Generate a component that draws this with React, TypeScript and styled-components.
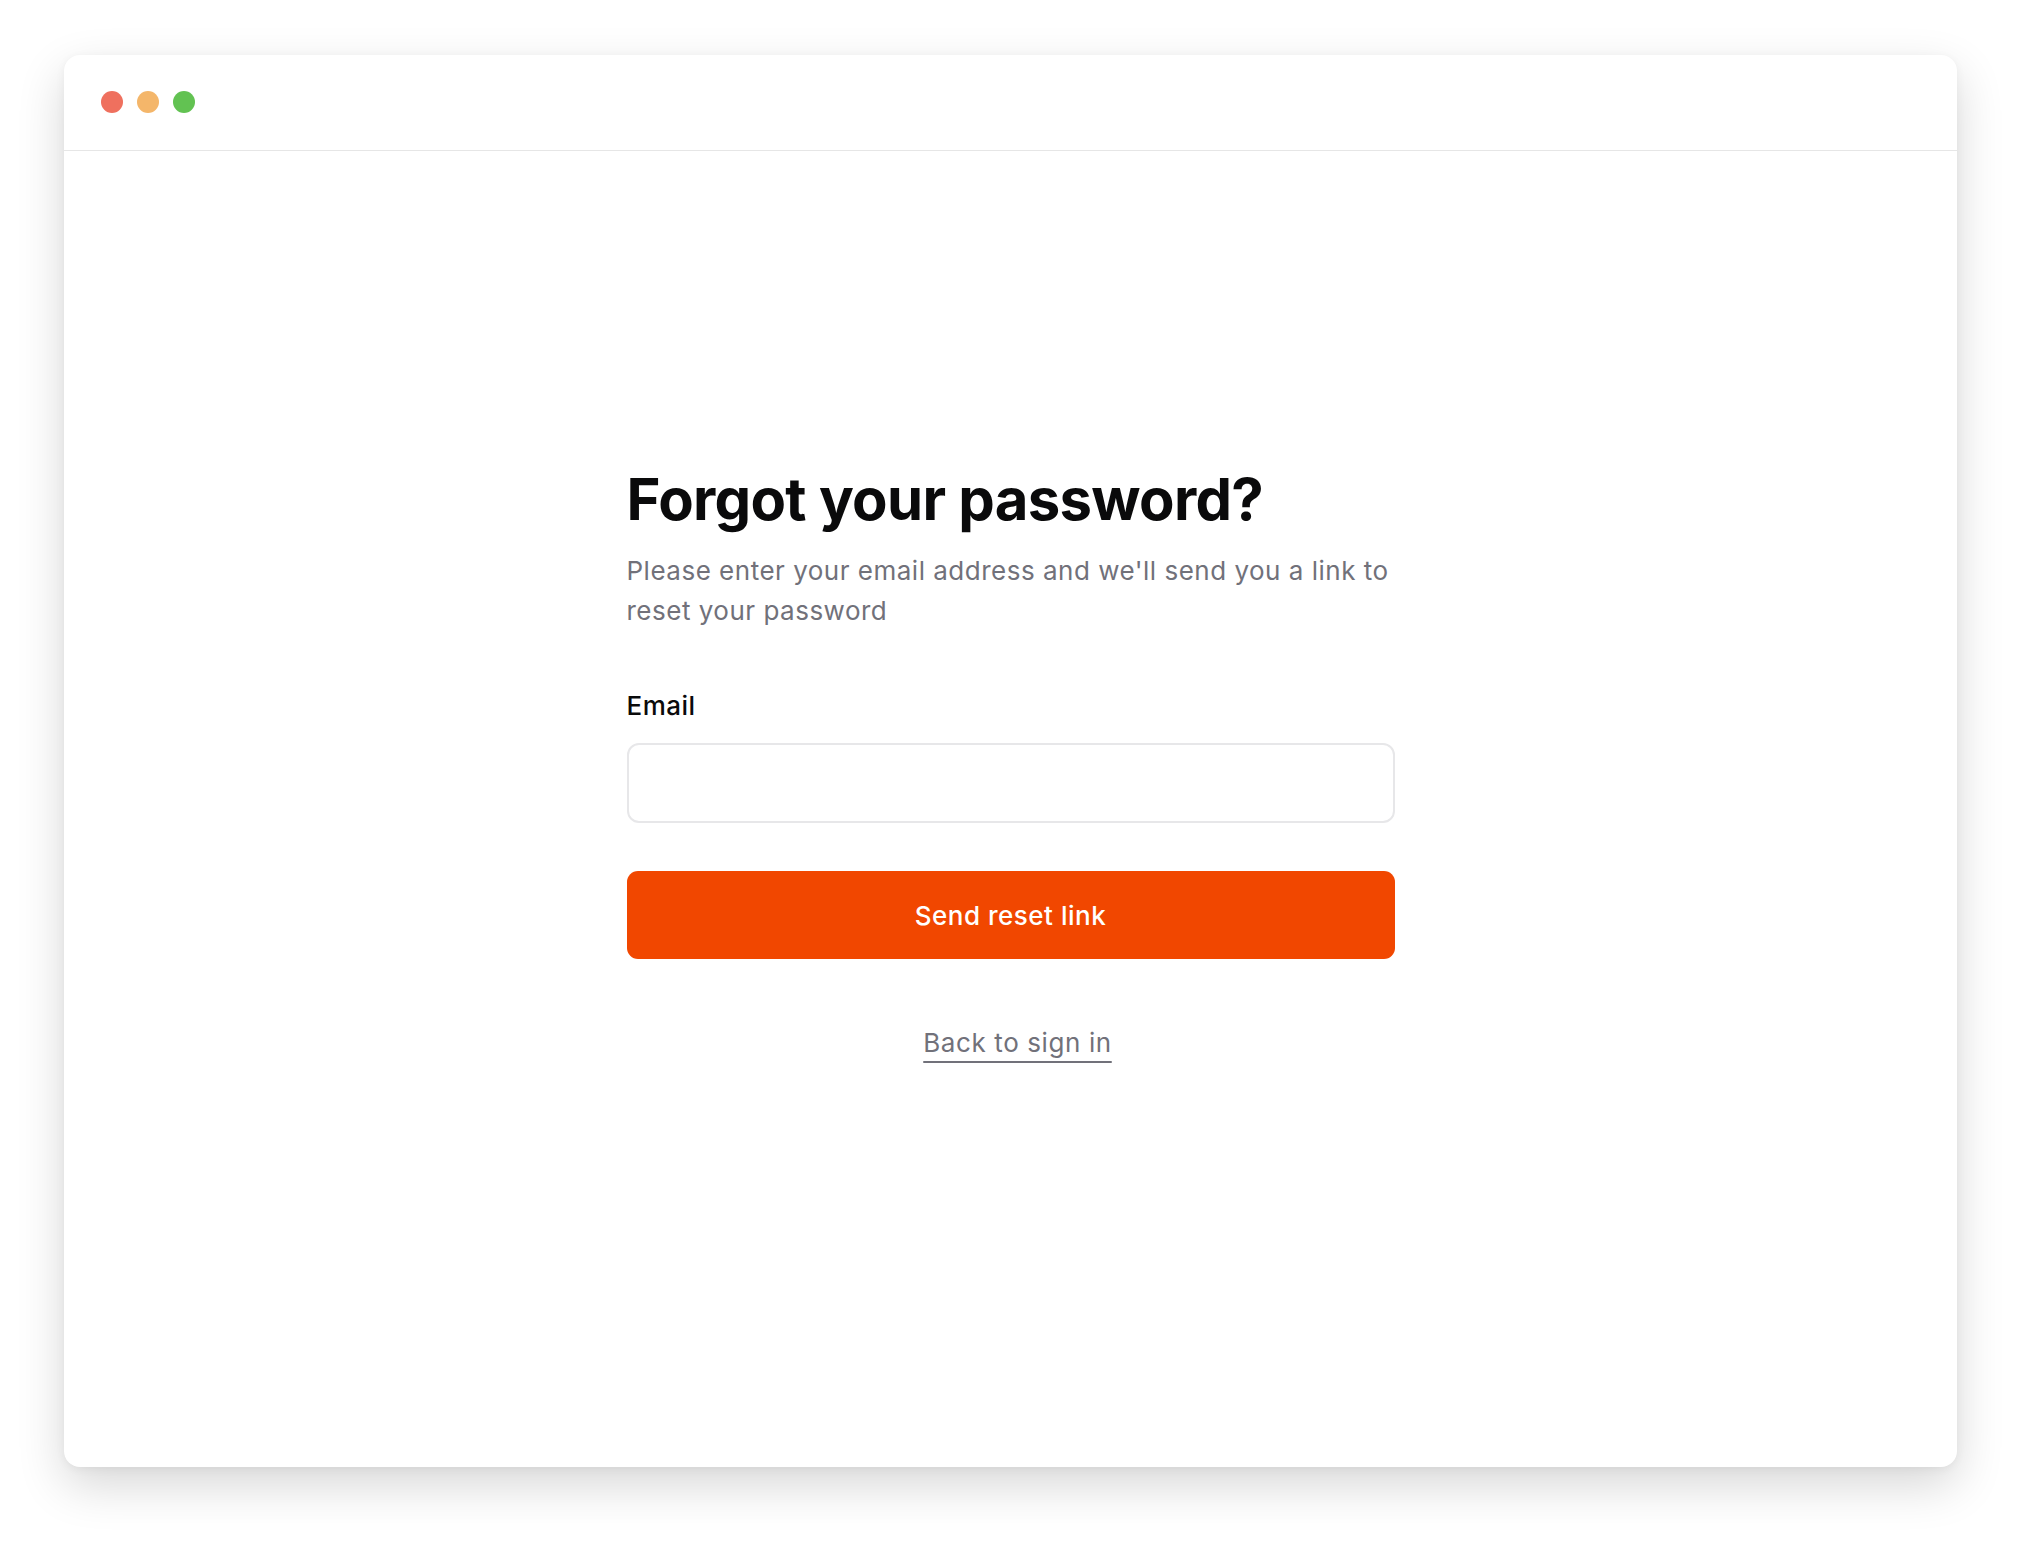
import React from "react";
import styled, { createGlobalStyle } from "styled-components";

const GlobalStyle = createGlobalStyle`
  html, body {
    margin: 0;
    padding: 0;
    background: #ffffff;
  }
  body {
    font-family: Inter, "Noto Sans", "Liberation Sans", sans-serif;
    -webkit-font-smoothing: antialiased;
  }
  * { box-sizing: border-box; }
`;

const Page = styled.div`
  padding: 55px 64px 74px;
  background: #ffffff;
`;

const Window = styled.div`
  height: 1412px;
  background: #ffffff;
  border-radius: 16px;
  box-shadow: 0 18px 48px rgba(0, 0, 0, 0.16), 0 2px 10px rgba(0, 0, 0, 0.05);
  display: flex;
  flex-direction: column;
  overflow: hidden;
`;

const TitleBar = styled.div`
  height: 96px;
  flex: none;
  display: flex;
  align-items: center;
  gap: 14px;
  padding: 0 0 1px 37px;
  border-bottom: 1px solid #e6e6e6;
`;

const Dot = styled.span<{ $color: string }>`
  width: 22px;
  height: 22px;
  border-radius: 50%;
  background: ${(p) => p.$color};
`;

const Main = styled.main`
  flex: 1;
  display: flex;
  justify-content: center;
  padding-top: 313px;
`;

const Form = styled.form`
  width: 768px;
  display: flex;
  flex-direction: column;
`;

const Heading = styled.h1`
  margin: 0;
  font-size: 58px;
  line-height: 70px;
  font-weight: 700;
  letter-spacing: -0.7px;
  color: #0a0a0b;
`;

const Subtitle = styled.p`
  margin: 17px 0 0;
  font-size: 26px;
  line-height: 40px;
  font-weight: 400;
  letter-spacing: 0.5px;
  color: #71717a;
`;

const Label = styled.label`
  margin-top: 55px;
  font-size: 26px;
  line-height: 40px;
  font-weight: 500;
  letter-spacing: 0.5px;
  color: #0a0a0b;
`;

const Input = styled.input`
  margin-top: 17px;
  height: 80px;
  width: 100%;
  border: 2px solid #e7e7e9;
  border-radius: 12px;
  padding: 0 22px;
  font-size: 26px;
  font-family: inherit;
  background: #ffffff;
  outline: none;
`;

const Button = styled.button`
  margin-top: 48px;
  height: 88px;
  width: 100%;
  border: none;
  border-radius: 11px;
  background: #f14700;
  color: #ffffff;
  font-family: inherit;
  font-size: 26px;
  font-weight: 500;
  letter-spacing: 0.5px;
  cursor: pointer;
`;

const LinkRow = styled.div`
  margin-top: 64px;
  display: flex;
  justify-content: center;
  padding-left: 14px;
`;

const BackLink = styled.a`
  font-size: 26px;
  line-height: 40px;
  letter-spacing: 0.6px;
  color: #71717a;
  text-decoration: underline;
  text-decoration-thickness: 2px;
  text-underline-offset: 9px;
  cursor: pointer;
`;

export default function App() {
  return (
    <>
      <GlobalStyle />
      <Page>
        <Window>
          <TitleBar>
            <Dot $color="#ef705e" />
            <Dot $color="#f4b66a" />
            <Dot $color="#62c252" />
          </TitleBar>
          <Main>
            <Form onSubmit={(e) => e.preventDefault()}>
              <Heading>Forgot your password?</Heading>
              <Subtitle>
                Please enter your email address and we'll send you a link to
                reset your password
              </Subtitle>
              <Label htmlFor="email">Email</Label>
              <Input id="email" type="email" />
              <Button type="submit">Send reset link</Button>
              <LinkRow>
                <BackLink>Back to sign in</BackLink>
              </LinkRow>
            </Form>
          </Main>
        </Window>
      </Page>
    </>
  );
}
